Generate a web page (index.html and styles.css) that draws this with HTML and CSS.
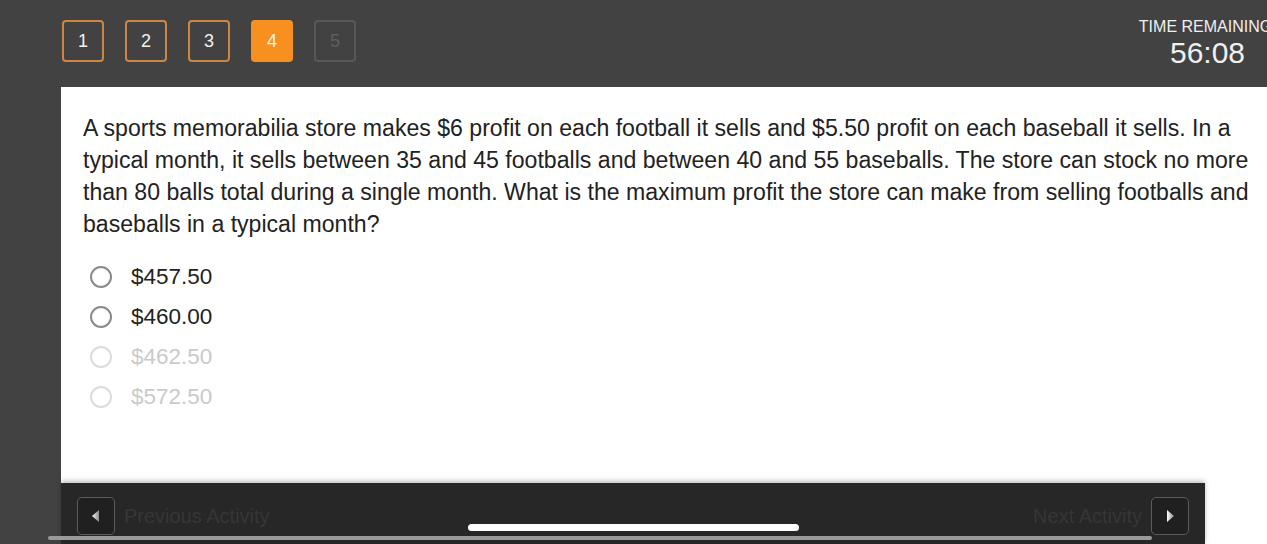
FILE: index.html
```html
<!DOCTYPE html>
<html lang="en">
<head>
    <meta charset="UTF-8">
    <meta name="viewport" content="width=device-width, initial-scale=1.0">
    <title>Practice Test - Question 4</title>
    <link rel="stylesheet" href="styles.css">
</head>
<body>
    <div class="top-bar">
        <div class="question-nav">
            <div class="nav-box done">1</div>
            <div class="nav-box done">2</div>
            <div class="nav-box done">3</div>
            <div class="nav-box current">4</div>
            <div class="nav-box locked">5</div>
        </div>
        <div class="timer">
            <div class="timer-label">TIME REMAINING</div>
            <div class="timer-value">56:08</div>
        </div>
    </div>

    <div class="main">
        <div class="side-strip"></div>
        <div class="panel">
            <div class="question-area">
                <p class="question-text">A sports memorabilia store makes $6 profit on each football it sells and $5.50 profit on each baseball it sells. In a typical month, it sells between 35 and 45 footballs and between 40 and 55 baseballs. The store can stock no more than 80 balls total during a single month. What is the maximum profit the store can make from selling footballs and baseballs in a typical month?</p>

                <div class="options">
                    <div class="option"><span class="radio"></span>$457.50</div>
                    <div class="option"><span class="radio"></span>$460.00</div>
                    <div class="option faded"><span class="radio"></span>$462.50</div>
                    <div class="option faded"><span class="radio"></span>$572.50</div>
                </div>
            </div>

            <div class="activity-bar">
                <div class="activity-link">
                    <div class="arrow-btn">
                        <svg width="10" height="14" viewBox="0 0 10 14">
                            <defs>
                                <linearGradient id="arrowLeft" x1="0" y1="0" x2="1" y2="0">
                                    <stop offset="0" stop-color="#ffffff"/>
                                    <stop offset="1" stop-color="#8a8a8a"/>
                                </linearGradient>
                            </defs>
                            <polygon points="8,1 8,13 1,7" fill="url(#arrowLeft)"/>
                        </svg>
                    </div>
                    <span class="activity-label">Previous Activity</span>
                </div>
                <div class="activity-link">
                    <span class="activity-label">Next Activity</span>
                    <div class="arrow-btn">
                        <svg width="10" height="14" viewBox="0 0 10 14">
                            <defs>
                                <linearGradient id="arrowRight" x1="0" y1="0" x2="1" y2="0">
                                    <stop offset="0" stop-color="#ffffff"/>
                                    <stop offset="1" stop-color="#8a8a8a"/>
                                </linearGradient>
                            </defs>
                            <polygon points="2,1 2,13 9,7" fill="url(#arrowRight)"/>
                        </svg>
                    </div>
                </div>
            </div>
        </div>
    </div>

    <!-- browser chrome drawn over the page -->
    <div class="scroll-track"></div>
    <div class="home-indicator"></div>
</body>
</html>
```

FILE: styles.css
```css
html, body {
    margin: 0;
    height: 100%;
}
body {
    font-family: "Liberation Sans", Arial, sans-serif;
    background-color: #424242;
    overflow: hidden;
    position: relative;
}
.top-bar {
    height: 87px;
    display: flex;
    box-sizing: border-box;
}
.question-nav {
    display: flex;
    gap: 21px;
    padding: 20px 0 0 62px;
}
.nav-box {
    width: 42px;
    height: 42px;
    box-sizing: border-box;
    border: 2px solid #cf8640;
    border-radius: 4px;
    color: #f2f2f2;
    font-size: 18px;
    display: flex;
    align-items: center;
    justify-content: center;
}
.nav-box.current {
    background-color: #f7901e;
    border-color: #f7901e;
    color: #fff6ea;
}
.nav-box.locked {
    border-color: #585858;
    color: #5e5e5e;
}
.timer {
    margin-left: auto;
    width: 133px;
    margin-right: -5px;
    padding-top: 17px;
    display: flex;
    flex-direction: column;
    align-items: center;
    color: #f0f0f0;
    white-space: nowrap;
}
.timer-label {
    font-size: 16px;
    line-height: 20px;
}
.timer-value {
    font-size: 30px;
    line-height: 32px;
    margin-left: 4px;
}
.main {
    display: flex;
    height: calc(100% - 87px);
}
.side-strip {
    width: 61px;
    flex-shrink: 0;
}
.panel {
    flex: 1;
    background-color: #ffffff;
    display: flex;
    flex-direction: column;
}
.question-area {
    flex: 1;
    padding: 25px 0 0 22px;
    max-width: 1180px;
}
.question-text {
    margin: 0;
    font-size: 23.1px;
    line-height: 32px;
    color: #222222;
}
.options {
    margin-top: 17px;
}
.option {
    display: flex;
    align-items: center;
    height: 40px;
    font-size: 22.5px;
    color: #222222;
    margin-left: 7px;
}
.radio {
    width: 22px;
    height: 22px;
    box-sizing: border-box;
    border: 2px solid #8a8a8a;
    border-radius: 50%;
    margin-right: 19px;
}
.option.faded {
    color: #cacaca;
}
.option.faded .radio {
    border-color: #dcdcdc;
}
.activity-bar {
    width: 1144px;
    height: 61px;
    box-sizing: border-box;
    background-color: #272727;
    box-shadow: 0 -2px 5px rgba(0, 0, 0, 0.25);
    display: flex;
    justify-content: space-between;
    padding: 14px 16px 0 16px;
}
.activity-link {
    display: flex;
    align-items: flex-start;
    gap: 9px;
}
.arrow-btn {
    width: 38px;
    height: 38px;
    box-sizing: border-box;
    border: 1px solid #5c5c5c;
    border-radius: 5px;
    background-color: #202020;
    display: flex;
    align-items: center;
    justify-content: center;
}
.activity-label {
    font-size: 20px;
    line-height: 38px;
    color: #363636;
}
.scroll-track {
    position: absolute;
    left: 48px;
    top: 536px;
    width: 1104px;
    height: 4px;
    border-radius: 2px;
    background-color: #9a9a9a;
}
.home-indicator {
    position: absolute;
    left: 468px;
    top: 524px;
    width: 331px;
    height: 7px;
    border-radius: 4px;
    background-color: #ffffff;
}
```
